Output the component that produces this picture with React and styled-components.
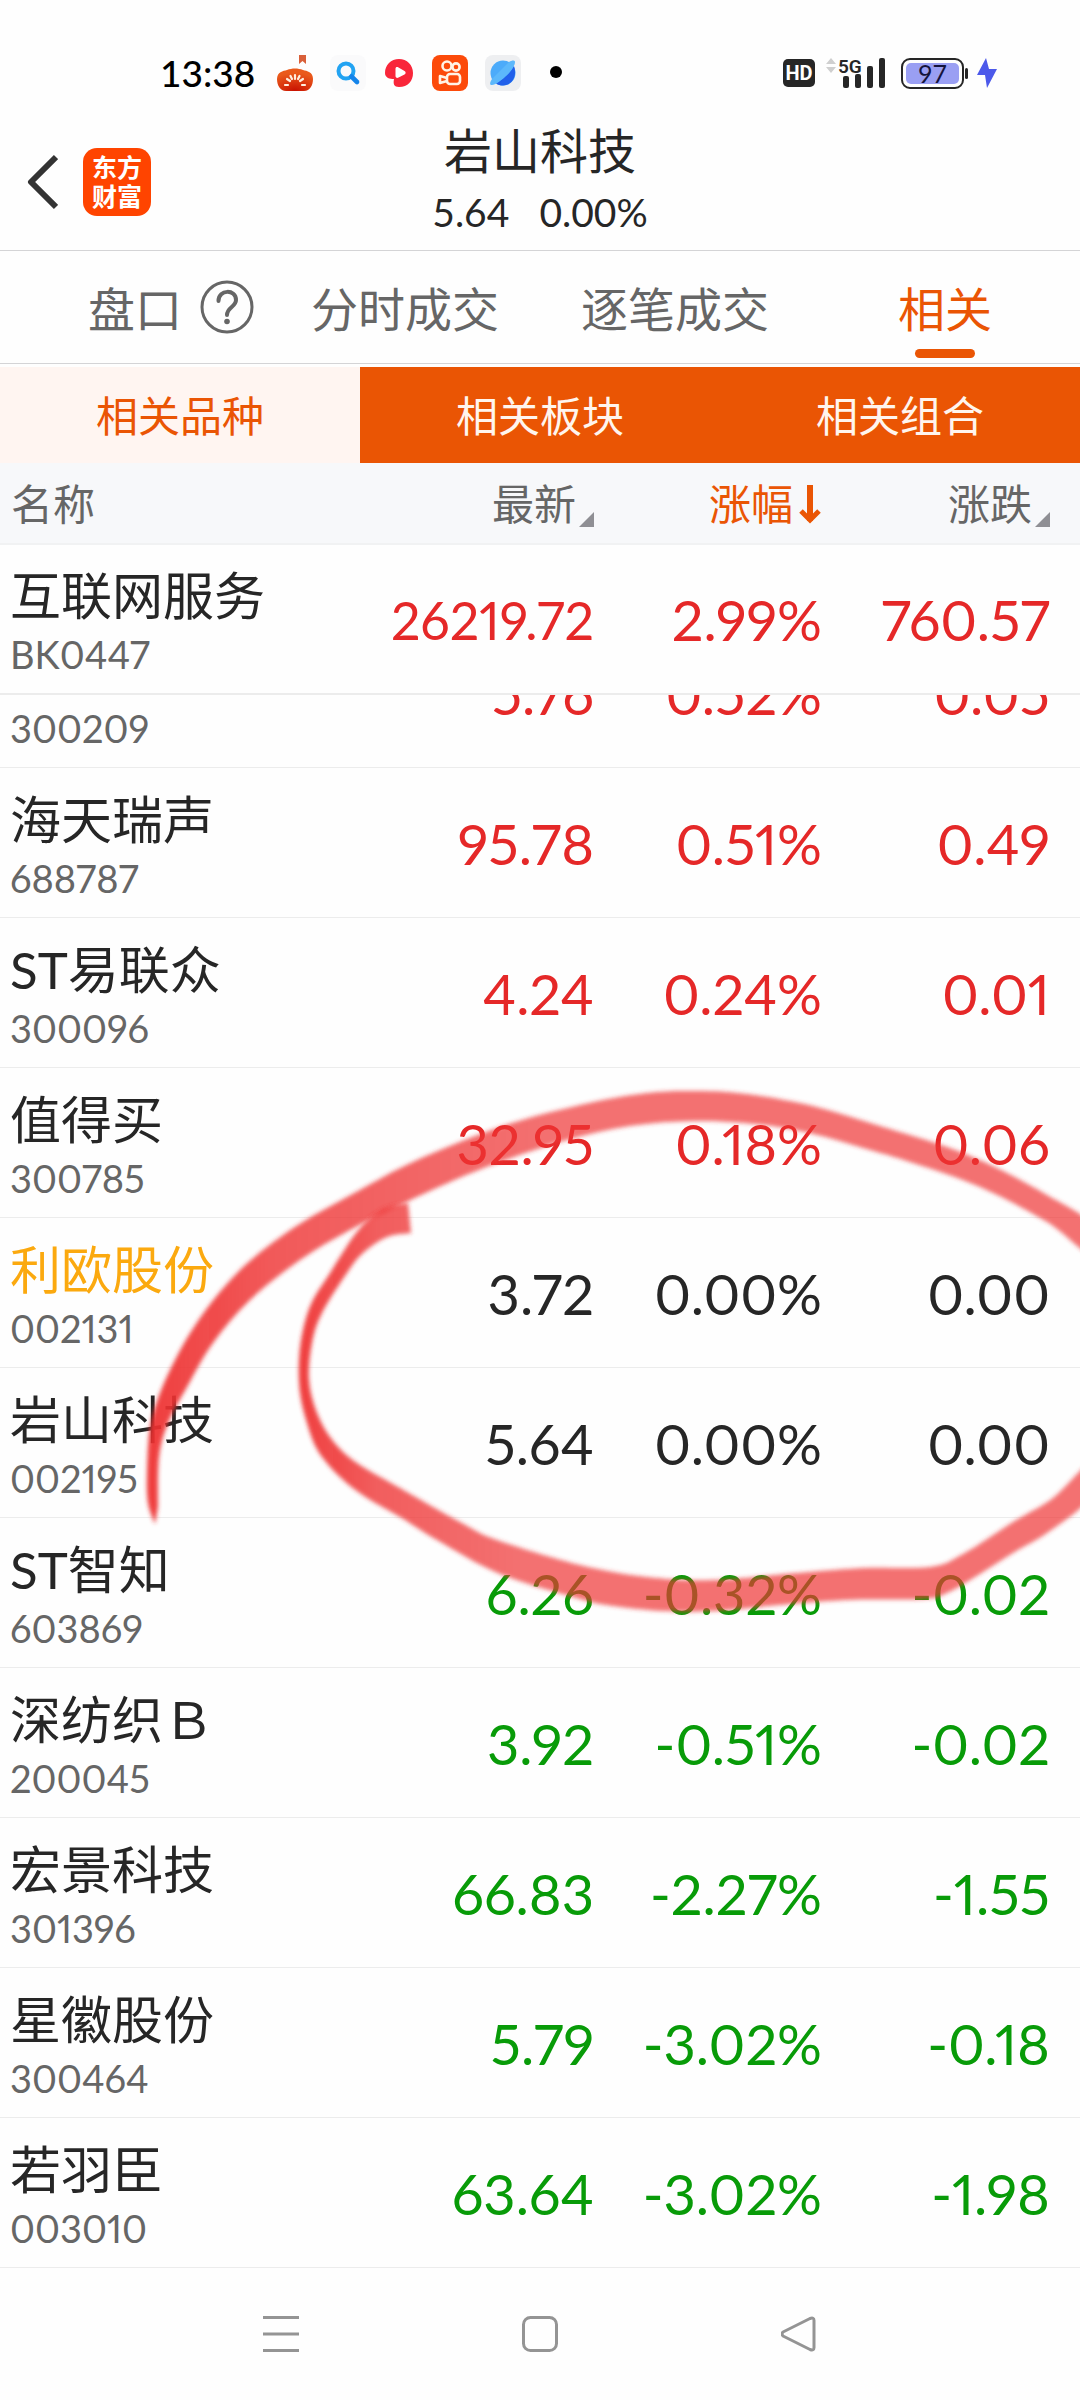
import React from "react";
import styled, { createGlobalStyle } from "styled-components";

const Global = createGlobalStyle`
  * { box-sizing: border-box; }
  body {
    margin: 0;
    background: #fefefe;
    color: #262626;
    font-family: Lato, "Noto Sans CJK SC", sans-serif;
  }
  button {
    border: 0;
    padding: 0;
    background: none;
    color: inherit;
    font: inherit;
    cursor: pointer;
  }
  svg { display: block; flex: none; }
`;

const ORANGE = "#ea5504";
const TONES = { up: "#e52828", flat: "#262626", down: "#089b08" };

const Screen = styled.div`
  position: relative;
  min-height: 100vh;
  display: flex;
  flex-direction: column;
  overflow: hidden;
`;

const StatusBar = styled.div`
  display: flex;
  align-items: center;
  justify-content: space-between;
  height: 110px;
  padding: 36px 83px 0 160px;
  color: #000;
`;

const StatusGroup = styled.div`
  display: flex;
  align-items: center;
  height: 40px;
  gap: ${(p) => p.$gap}px;
`;

const Clock = styled.time`
  width: 94px;
  font-size: 37px;
  font-weight: 500;
  line-height: 38px;
  margin-right: 6px;
`;

const HdBadge = styled.span`
  width: 32px;
  border-radius: 5px;
  background: #262626;
  color: #fff;
  font: 700 20px/28px Roboto, sans-serif;
  text-align: center;
`;

const Battery = styled.span`
  display: flex;
  align-items: center;
  &::after {
    content: "";
    width: 3px;
    height: 11px;
    margin-left: 1px;
    border-radius: 2px;
    background: #262626;
  }
`;

const BatteryLevel = styled.span`
  width: 63px;
  height: 31px;
  border: 2px solid #262626;
  border-radius: 9px;
  padding: 3px;
  text-align: center;
  span {
    display: block;
    border-radius: 5px;
    background: #9a9ff3;
    color: #14143c;
    font-size: 25px;
    line-height: 21px;
  }
`;

const Header = styled.header`
  display: grid;
  grid-template-columns: 1fr auto 1fr;
  height: 141px;
  border-bottom: 1px solid #d4d4d6;
`;

const HeaderLeft = styled.div`
  display: flex;
  align-items: center;
  gap: 25px;
  padding: 3px 0 0 26px;
`;

const AppLogo = styled.div`
  width: 68px;
  height: 68px;
  border-radius: 14px;
  padding: 5px 0;
  background: #ff4400;
  color: #fff;
  font-size: 25px;
  font-weight: 700;
  line-height: 29px;
  text-align: center;
`;

const Titles = styled.div`
  display: flex;
  flex-direction: column;
  align-items: center;
  gap: 6px;
  padding-top: 11px;
`;

const Title = styled.h1`
  margin: 0;
  font-size: 48px;
  font-weight: 400;
  line-height: 60px;
`;

const Quote = styled.div`
  display: flex;
  gap: 30px;
  font-size: 39px;
  line-height: 50px;
`;

const Tabs = styled.nav`
  display: grid;
  grid-template-columns: repeat(4, 1fr);
  height: 113px;
  margin-bottom: 3px;
  border-bottom: 1px solid #d4d4d6;
`;

const Tab = styled.button`
  position: relative;
  display: flex;
  align-items: center;
  justify-content: center;
  padding-top: 3px;
  color: ${(p) => (p.$active ? ORANGE : "#666")};
  font-size: 47px;
  line-height: 60px;
  &::after {
    content: "";
    display: ${(p) => (p.$active ? "block" : "none")};
    position: absolute;
    bottom: 5px;
    width: 60px;
    height: 9px;
    border-radius: 5px;
    background: ${ORANGE};
  }
  svg { margin: 0 -72px 4px 18px; }
`;

const Segments = styled.div`
  display: grid;
  grid-template-columns: repeat(3, 1fr);
`;

const Segment = styled.button`
  height: 96px;
  padding-top: 2px;
  background: ${(p) => (p.$active ? "#fff5f1" : ORANGE)};
  color: ${(p) => (p.$active ? ORANGE : "#fff5ee")};
  font-size: 42px;
  line-height: 60px;
`;

const Table = styled.table`
  width: 100%;
  table-layout: fixed;
  border-collapse: separate;
  border-spacing: 0;
  font-variant-numeric: proportional-nums;
`;

const HeadCell = styled.th`
  width: ${(p) => p.$width || "auto"};
  height: 82px;
  padding: 2px ${(p) => (p.$last ? 30 : 0)}px 0 ${(p) => (p.$name ? 11 : 0)}px;
  border-bottom: 2px solid #f1f2f3;
  background: #f7f8fa;
  color: ${(p) => (p.$active ? ORANGE : "#666")};
  font-size: 42px;
  font-weight: 400;
  line-height: 60px;
  text-align: left;
`;

const SortButton = styled.button`
  display: flex;
  align-items: center;
  justify-content: flex-end;
  width: 100%;
  gap: ${(p) => (p.$active ? 5 : 3)}px;
`;

const Corner = styled.span`
  align-self: flex-end;
  width: 15px;
  height: 15px;
  margin-bottom: 7px;
  background: #8f8f94;
  clip-path: polygon(100% 0, 100% 100%, 0 100%);
`;

const Cell = styled.td`
  width: ${(p) => p.$width || "auto"};
  height: 150px;
  padding: 2px ${(p) => (p.$last ? 30 : 0)}px 0 0;
  border-bottom: ${(p) => (p.$pinned ? 2 : 1)}px solid #ececec;
  color: ${(p) => TONES[p.$tone]};
  font-size: ${(p) => (p.$long ? 52 : 56)}px;
  line-height: 70px;
  text-align: right;
  white-space: nowrap;
`;

const NameCell = styled(Cell)`
  padding-top: 4px;
  padding-left: 10px;
  text-align: left;
`;

const StockName = styled.div`
  min-height: 66px;
  color: ${(p) => (p.$marked ? "#fba90f" : "#262626")};
  font-size: 51px;
  line-height: 66px;
`;

const StockCode = styled.div`
  color: #666;
  font-size: 38px;
  line-height: 50px;
`;

const ListViewport = styled.div`
  overflow: hidden;
  table { margin-top: -77px; }
`;

const NavBar = styled.nav`
  display: grid;
  grid-template-columns: repeat(3, 1fr);
  height: 132px;
  padding: 0 152px;
  button {
    display: flex;
    align-items: center;
    justify-content: center;
  }
`;

const Ink = styled.svg`
  position: absolute;
  top: 0;
  left: 0;
  width: 100%;
  pointer-events: none;
`;

const PINNED = [{ name: "互联网服务", code: "BK0447", last: "26219.72", pct: "2.99%", chg: "760.57", tone: "up" }];

const STOCKS = [
  { name: "", code: "300209", last: "5.76", pct: "0.52%", chg: "0.05", tone: "up" },
  { name: "海天瑞声", code: "688787", last: "95.78", pct: "0.51%", chg: "0.49", tone: "up" },
  { name: "ST易联众", code: "300096", last: "4.24", pct: "0.24%", chg: "0.01", tone: "up" },
  { name: "值得买", code: "300785", last: "32.95", pct: "0.18%", chg: "0.06", tone: "up" },
  { name: "利欧股份", code: "002131", last: "3.72", pct: "0.00%", chg: "0.00", tone: "flat", marked: true },
  { name: "岩山科技", code: "002195", last: "5.64", pct: "0.00%", chg: "0.00", tone: "flat" },
  { name: "ST智知", code: "603869", last: "6.26", pct: "-0.32%", chg: "-0.02", tone: "down" },
  { name: "深纺织Ｂ", code: "200045", last: "3.92", pct: "-0.51%", chg: "-0.02", tone: "down" },
  { name: "宏景科技", code: "301396", last: "66.83", pct: "-2.27%", chg: "-1.55", tone: "down" },
  { name: "星徽股份", code: "300464", last: "5.79", pct: "-3.02%", chg: "-0.18", tone: "down" },
  { name: "若羽臣", code: "003010", last: "63.64", pct: "-3.02%", chg: "-1.98", tone: "down" },
];

const COL = "228px";
const LAST_COL = "258px";

function Rows({ items, pinned }) {
  return (
    <tbody>
      {items.map((s) => (
        <tr key={s.code}>
          <NameCell $pinned={pinned}>
            <StockName $marked={s.marked}>{s.name}</StockName>
            <StockCode>{s.code}</StockCode>
          </NameCell>
          <Cell $width={COL} $tone={s.tone} $pinned={pinned} $long={s.last.length > 7}>{s.last}</Cell>
          <Cell $width={COL} $tone={s.tone} $pinned={pinned}>{s.pct}</Cell>
          <Cell $width={LAST_COL} $tone={s.tone} $pinned={pinned} $last>{s.chg}</Cell>
        </tr>
      ))}
    </tbody>
  );
}

// Outlines of the two hand-drawn marker strokes.
const UPPER_STROKE = [
  [155, 1524], [148, 1503], [147, 1473], [150, 1427], [160, 1393], [175, 1360], [194, 1327], [219, 1293],
  [251, 1260], [298, 1225], [358, 1191], [415, 1161], [500, 1127], [580, 1105], [647, 1093], [697, 1091],
  [747, 1094], [813, 1106], [880, 1126], [947, 1147], [997, 1168], [1047, 1195], [1090, 1223], [1090, 1254],
  [1047, 1222], [980, 1187], [913, 1163], [863, 1148], [813, 1134], [763, 1125], [697, 1121], [630, 1126],
  [567, 1140], [500, 1162], [450, 1182], [400, 1205], [350, 1230], [300, 1260], [250, 1300], [213, 1343],
  [187, 1387], [168, 1423], [159, 1457], [158, 1507],
];
const LOWER_STROKE = [
  [408, 1203], [388, 1207], [371, 1217], [353, 1237], [330, 1273], [312, 1302], [303, 1330], [299, 1360],
  [300, 1393], [307, 1423], [318, 1451], [340, 1477], [367, 1498], [400, 1517], [437, 1540], [500, 1574],
  [580, 1599], [613, 1606], [663, 1611], [713, 1611], [780, 1605], [847, 1600], [923, 1599], [947, 1593],
  [980, 1574], [1013, 1553], [1047, 1533], [1090, 1498], [1090, 1464], [1053, 1498], [1013, 1522],
  [963, 1554], [930, 1567], [863, 1568], [797, 1573], [713, 1580], [647, 1577], [580, 1565], [497, 1540],
  [460, 1522], [400, 1488], [357, 1463], [333, 1441], [317, 1413], [309, 1380], [312, 1343], [322, 1313],
  [347, 1273], [363, 1253], [387, 1237], [411, 1233],
];

function smooth(points) {
  const last = points.length - 1;
  let d = `M${points[0]}`;
  for (let i = 0; i < last; i++) {
    const b = points[i];
    const c = points[i + 1];
    const a = points[i - 1] || b;
    const e = points[i + 2] || c;
    const c1 = [b[0] + (c[0] - a[0]) / 6, b[1] + (c[1] - a[1]) / 6];
    const c2 = [c[0] - (e[0] - b[0]) / 6, c[1] - (e[1] - b[1]) / 6];
    d += `C${c1} ${c2} ${c}`;
  }
  return d + "Z";
}

function MarkerInk() {
  return (
    <Ink viewBox="0 0 1080 2400" aria-hidden="true">
      <defs>
        <filter id="soft" x="-5%" y="-5%" width="110%" height="110%">
          <feGaussianBlur stdDeviation="2" />
        </filter>
        <linearGradient id="inkA" gradientUnits="userSpaceOnUse" x1="150" y1="0" x2="550" y2="0">
          <stop offset="0" stopColor="#ee3030" stopOpacity="0.93" />
          <stop offset="0.3" stopColor="#ee3030" stopOpacity="0.8" />
          <stop offset="1" stopColor="#ee3535" stopOpacity="0.7" />
        </linearGradient>
        <linearGradient id="inkB" gradientUnits="userSpaceOnUse" x1="300" y1="0" x2="520" y2="0">
          <stop offset="0" stopColor="#ee3030" stopOpacity="0.93" />
          <stop offset="0.35" stopColor="#ee3030" stopOpacity="0.78" />
          <stop offset="1" stopColor="#ee3535" stopOpacity="0.7" />
        </linearGradient>
      </defs>
      <path d={smooth(UPPER_STROKE)} fill="url(#inkA)" filter="url(#soft)" />
      <path d={smooth(LOWER_STROKE)} fill="url(#inkB)" filter="url(#soft)" />
    </Ink>
  );
}

function StatusIcons() {
  return (
    <>
      <svg width="36" height="36" viewBox="0 0 36 36">
        <defs>
          <radialGradient id="pumpkin" cx=".5" cy="1" r=".8">
            <stop offset="0" stopColor="#c81000" />
            <stop offset="1" stopColor="#ea5a1c" />
          </radialGradient>
        </defs>
        <path d="M22 0h7v9l-3.500-3-3.500 3z" fill="#d9603a" />
        <path d="M0 24c0-7 6-8 10-9 5-2 11-2 16 0 4 1 10 2 10 9 0 6-3 12-9 12H9c-6 0-9-6-9-12z" fill="url(#pumpkin)" />
        <path d="M8 30l3 0M10 24l3 2M18 20v4M26 24l-3 2M28 30l-3 0M13.500 21l1.500 3M22.500 21l-1.500 3" stroke="#fff0e0" strokeWidth="2.200" strokeLinecap="round" />
      </svg>
      <svg width="36" height="36" viewBox="0 0 36 36">
        <rect width="36" height="36" rx="8" fill="#fafafb" />
        <circle cx="16" cy="16" r="7.500" fill="none" stroke="#22a3f2" strokeWidth="4" />
        <path d="M21.500 21.500l5.500 5.500" stroke="#1484ea" strokeWidth="4.600" strokeLinecap="round" />
      </svg>
      <svg width="32" height="36" viewBox="0 0 32 36">
        <path d="M16 4c8 0 14 6 14 14 0 8-5 14-14 14-5 0-6-3-5-8-4 0-9-1-9-6C2 10 8 4 16 4z" fill="#f9263a" />
        <path d="M12.500 14c0-2 1.500-2.500 3-1.500l6 3.500c1.500 1 1.500 2.500 0 3.500l-6 3c-1.500 1-3 0-3-1.500z" fill="#fff" />
      </svg>
      <svg width="36" height="36" viewBox="0 0 36 36">
        <rect width="36" height="36" rx="8" fill="#fc4a0a" />
        <g fill="none" stroke="#fff3e6" strokeWidth="2.600" strokeLinejoin="round">
          <circle cx="15" cy="11" r="4.500" />
          <circle cx="24" cy="12" r="3.600" />
          <rect x="15" y="19" width="13" height="10" rx="3" />
          <path d="M15 23l-7-2v7l7-2" />
        </g>
      </svg>
      <svg width="36" height="36" viewBox="0 0 36 36">
        <rect width="36" height="36" rx="8" fill="#eeeff1" />
        <circle cx="18" cy="18" r="12.500" fill="#4cabfa" />
        <path d="M29 11c3 8 0 19-11 19.500-3 0-5-.500-7-2C19 24 25 18 29 11z" fill="#2160ea" />
        <path d="M24 7c3-2 6-2 6 0 0 3-3 8-8 13S10 30 7 30s-2-3 0-6" fill="#5cb8fb" />
      </svg>
      <svg width="36" height="36" viewBox="0 0 36 36">
        <circle cx="18" cy="17" r="6" />
      </svg>
    </>
  );
}

export default function App() {
  return (
    <Screen>
      <Global />
      <StatusBar>
        <StatusGroup $gap={17}>
          <Clock>13:38</Clock>
          <StatusIcons />
        </StatusGroup>
        <StatusGroup $gap={9}>
          <HdBadge>HD</HdBadge>
          <svg width="68" height="34" viewBox="0 0 68 34" fill="#262626">
            <path d="M2 8l5-6 5 6zM2 11h10l-5 6z" fill="#cfcfcf" />
            <text x="14" y="17" fontFamily="Roboto" fontSize="19" fontWeight="600">5G</text>
            <rect x="19" y="20" width="6" height="12" rx="2" />
            <rect x="31" y="18" width="6" height="14" rx="2" />
            <rect x="43" y="10" width="6" height="22" rx="2" />
            <rect x="55" y="2" width="6" height="30" rx="2" />
          </svg>
          <Battery><BatteryLevel><span>97</span></BatteryLevel></Battery>
          <svg width="20" height="32" viewBox="0 0 20 32">
            <path d="M9 1L0 18h8l2 13 10-19h-8z" fill="#4c59ea" />
          </svg>
        </StatusGroup>
      </StatusBar>

      <Header>
        <HeaderLeft>
          <button aria-label="返回">
            <svg width="32" height="56" viewBox="0 0 32 56" fill="none" stroke="#333" strokeWidth="6">
              <path d="M30 3L5 28l25 25" strokeLinejoin="round" />
            </svg>
          </button>
          <AppLogo>东方<br />财富</AppLogo>
        </HeaderLeft>
        <Titles>
          <Title>岩山科技</Title>
          <Quote><span>5.64</span><span>0.00%</span></Quote>
        </Titles>
      </Header>

      <Tabs>
        <Tab>
          盘口
          <svg width="54" height="54" viewBox="0 0 54 54" fill="none" stroke="#666" strokeWidth="3">
            <circle cx="27" cy="27" r="25" />
            <path d="M18.500 21c0-12 17.500-12 17.500-1 0 7-9 7-9 15" strokeWidth="4" strokeLinecap="round" />
            <circle cx="27" cy="41.500" r="2.800" fill="#666" stroke="none" />
          </svg>
        </Tab>
        <Tab>分时成交</Tab>
        <Tab>逐笔成交</Tab>
        <Tab $active>相关</Tab>
      </Tabs>

      <Segments>
        <Segment $active>相关品种</Segment>
        <Segment>相关板块</Segment>
        <Segment>相关组合</Segment>
      </Segments>

      <Table>
        <thead>
          <tr>
            <HeadCell $name>名称</HeadCell>
            <HeadCell $width={COL}><SortButton>最新<Corner /></SortButton></HeadCell>
            <HeadCell $width={COL} $active>
              <SortButton $active>
                涨幅
                <svg width="24" height="42" viewBox="0 0 24 42" fill="none" stroke={ORANGE}>
                  <path d="M12 2v36" strokeWidth="6" />
                  <path d="M3 28l9 9 9-9" strokeWidth="5" />
                </svg>
              </SortButton>
            </HeadCell>
            <HeadCell $width={LAST_COL} $last><SortButton>涨跌<Corner /></SortButton></HeadCell>
          </tr>
        </thead>
        <Rows items={PINNED} pinned />
      </Table>
      <ListViewport>
        <Table aria-label="相关品种">
          <Rows items={STOCKS} />
        </Table>
      </ListViewport>

      <NavBar>
        <button aria-label="菜单">
          <svg width="36" height="36" viewBox="0 0 36 36" stroke="#949494" strokeWidth="3">
            <path d="M0 1.500h36M0 18h36M0 34.500h36" />
          </svg>
        </button>
        <button aria-label="主页">
          <svg width="36" height="36" viewBox="0 0 36 36" fill="none" stroke="#949494" strokeWidth="3">
            <rect x="1.500" y="1.500" width="33" height="33" rx="7" />
          </svg>
        </button>
        <button aria-label="后退">
          <svg width="36" height="36" viewBox="0 0 36 36" fill="none" stroke="#949494" strokeWidth="3" strokeLinejoin="round">
            <path d="M28 2.500L1 16q-2 2 0 4l27 13.500q4 1.500 4-2v-27q0-3.500-4-2z" transform="translate(1 0)" />
          </svg>
        </button>
      </NavBar>
      <MarkerInk />
    </Screen>
  );
}
